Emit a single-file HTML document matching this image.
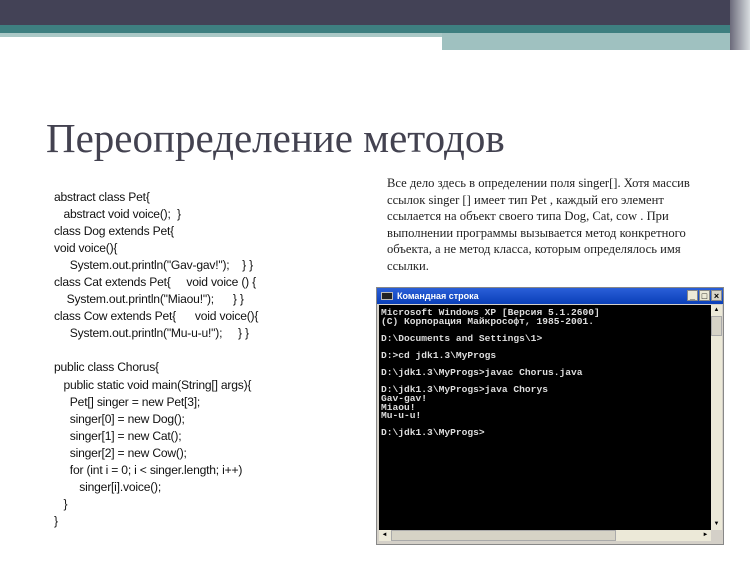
<!DOCTYPE html>
<html><head><meta charset="utf-8"><style>
body{margin:0;width:750px;height:562px;background:#fff;position:relative;overflow:hidden;font-family:"Liberation Sans",sans-serif}
.abs{position:absolute}
.code{left:54px;top:189px;font-size:12.1px;line-height:17.05px;color:#111;white-space:pre;letter-spacing:-0.2px}
.rt{left:387px;top:175px;font-family:"Liberation Serif","DejaVu Serif",serif;font-size:12.6px;line-height:16.5px;color:#222;white-space:nowrap}
.con{left:376px;top:287px;width:348px;height:258px;background:#d4d0c8;box-sizing:border-box;border:1px solid #888}
.tb{left:0;top:0;right:0;height:16px;background:linear-gradient(#2a5fd8,#0a3fb8);color:#fff;font-size:9px;font-weight:bold;line-height:16px;padding-left:20px}
.scr{left:2px;top:17px;width:332px;height:225px;background:#000;color:#ddd;font-family:"Liberation Mono",monospace;font-weight:bold;font-size:9.6px;line-height:8.6px;white-space:pre;padding:4px 0 0 2px;box-sizing:border-box;overflow:hidden}
.btn{top:2px;width:11px;height:11px;background:#ece9d8;border:1px solid #888;box-sizing:border-box;color:#000;font-size:9px;line-height:10px;text-align:center;font-weight:bold}
</style></head><body>
<div class="abs" style="left:0;top:0;width:750px;height:25px;background:#434256"></div>
<div class="abs" style="left:0;top:25px;width:750px;height:8px;background:#3e7f80"></div>
<div class="abs" style="left:0;top:33px;width:442px;height:4px;background:#aac8c6"></div>
<div class="abs" style="left:442px;top:33px;width:295px;height:17px;background:#9fc1c0"></div>
<div class="abs" style="left:730px;top:0;width:20px;height:50px;background:linear-gradient(90deg,#6b6a7a,#d8dde0)"></div>
<div class="abs" style="left:46px;top:114px;font-family:'Liberation Serif',serif;font-size:41px;color:#434250;white-space:nowrap">Переопределение методов</div>
<div class="abs code">abstract class Pet{
   abstract void voice();  }
class Dog extends Pet{
void voice(){
     System.out.println("Gav-gav!");    } }
class Cat extends Pet{     void voice () {
    System.out.println("Miaou!");      } }
class Cow extends Pet{      void voice(){
     System.out.println("Mu-u-u!");     } }

public class Chorus{
   public static void main(String[] args){
     Pet[] singer = new Pet[3];
     singer[0] = new Dog();
     singer[1] = new Cat();
     singer[2] = new Cow();
     for (int i = 0; i &lt; singer.length; i++)
        singer[i].voice();
   }
}</div>
<div class="abs rt">Все дело здесь в определении поля singer[]. Хотя массив<br>ссылок singer [] имеет тип Pet , каждый его элемент<br>ссылается на объект своего типа Dog, Cat, cow . При<br>выполнении программы вызывается метод конкретного<br>объекта, а не метод класса, которым определялось имя<br>ссылки.</div>
<div class="abs con">
<div class="abs tb">Командная строка<span class="abs" style="left:4px;top:4px;width:12px;height:8px;background:#222;border:1px solid #bbb;box-sizing:border-box"></span></div>
<div class="abs btn" style="left:310px">_</div>
<div class="abs btn" style="left:322px">□</div>
<div class="abs btn" style="left:334px;background:#d8d4c8;color:#000">×</div>
<div class="abs scr">Microsoft Windows XP [Версия 5.1.2600]
(C) Корпорация Майкрософт, 1985-2001.

D:\Documents and Settings\1&gt;

D:&gt;cd jdk1.3\MyProgs

D:\jdk1.3\MyProgs&gt;javac Chorus.java

D:\jdk1.3\MyProgs&gt;java Chorys
Gav-gav!
Miaou!
Mu-u-u!

D:\jdk1.3\MyProgs&gt;</div>
<div class="abs" style="left:334px;top:17px;width:11px;height:225px;background:#ece9d8"></div>
<div class="abs" style="left:334px;top:17px;width:11px;height:11px;font-size:6px;text-align:center;line-height:11px">▲</div>
<div class="abs" style="left:334px;top:231px;width:11px;height:11px;font-size:6px;text-align:center;line-height:11px">▼</div>
<div class="abs" style="left:334px;top:28px;width:11px;height:20px;background:#d6d3c6;border:1px solid #aaa;box-sizing:border-box"></div>
<div class="abs" style="left:2px;top:242px;width:332px;height:11px;background:#ece9d8"></div>
<div class="abs" style="left:2px;top:242px;width:11px;height:11px;font-size:6px;text-align:center;line-height:11px">◄</div>
<div class="abs" style="left:323px;top:242px;width:11px;height:11px;font-size:6px;text-align:center;line-height:11px">►</div>
<div class="abs" style="left:14px;top:242px;width:225px;height:11px;background:#d6d3c6;border:1px solid #aaa;box-sizing:border-box"></div>
</div>
</body></html>
